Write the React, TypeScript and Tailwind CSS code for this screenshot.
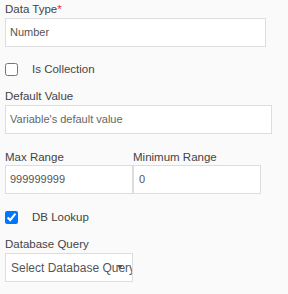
import React from "react";

const font = { fontFamily: '"Liberation Sans", Arial, sans-serif' };

export default function App() {
  return (
    <div
      className="w-[288px] h-[294px] bg-[#fafafa] pl-[5px] pt-[2px] overflow-hidden"
      style={font}
    >
      <div className="text-[11.5px] leading-[14px] text-[#444] mb-[2px]">
        Data Type<span className="text-[#e53935]">*</span>
      </div>
      <div className="w-[261px] h-[29px] bg-white border border-[#dddddd] flex items-center pl-[4px] text-[11px] text-[#555]">
        Number
      </div>

      <div className="mt-[16px] h-[13px] flex items-center">
        <input type="checkbox" className="m-0 w-[13px] h-[13px]" />
        <span className="ml-[14px] text-[11.5px] leading-[13px] text-[#444]">Is Collection</span>
      </div>

      <div className="mt-[13px] text-[11.5px] leading-[14px] text-[#444] mb-[2px]">Default Value</div>
      <div className="w-[267px] h-[29px] bg-white border border-[#dddddd] flex items-center pl-[4px] text-[11px] text-[#666]">
        Variable's default value
      </div>

      <div className="mt-[16px] flex">
        <div className="w-[128px]">
          <div className="text-[11.5px] leading-[14px] text-[#444] mb-[1px]">Max Range</div>
          <div className="w-[128px] h-[29px] bg-white border border-[#dddddd] flex items-center pl-[4px] text-[11px] text-[#555]">
            999999999
          </div>
        </div>
        <div className="w-[128px]">
          <div className="text-[11.5px] leading-[14px] text-[#444] mb-[1px]">Minimum Range</div>
          <div className="w-[128px] h-[29px] bg-white border border-[#dddddd] flex items-center pl-[5px] text-[11px] text-[#555]">
            0
          </div>
        </div>
      </div>

      <div className="mt-[17px] h-[13px] flex items-center">
        <input type="checkbox" defaultChecked className="m-0 w-[13px] h-[13px]" />
        <span className="ml-[14px] text-[11.5px] leading-[13px] text-[#444]">DB Lookup</span>
      </div>

      <div className="mt-[13px] text-[11.5px] leading-[14px] text-[#444] mb-[2px]">Database Query</div>
      <div className="relative w-[128px] h-[29px] bg-white border border-[#dddddd] flex items-center pl-[5px] text-[12px] text-[#555] overflow-hidden whitespace-nowrap">
        Select Database Query
        <span className="absolute left-[111px] top-[11px] w-0 h-0 border-l-[3px] border-r-[3px] border-t-[4px] border-l-transparent border-r-transparent border-t-[#555]" />
      </div>
    </div>
  );
}
